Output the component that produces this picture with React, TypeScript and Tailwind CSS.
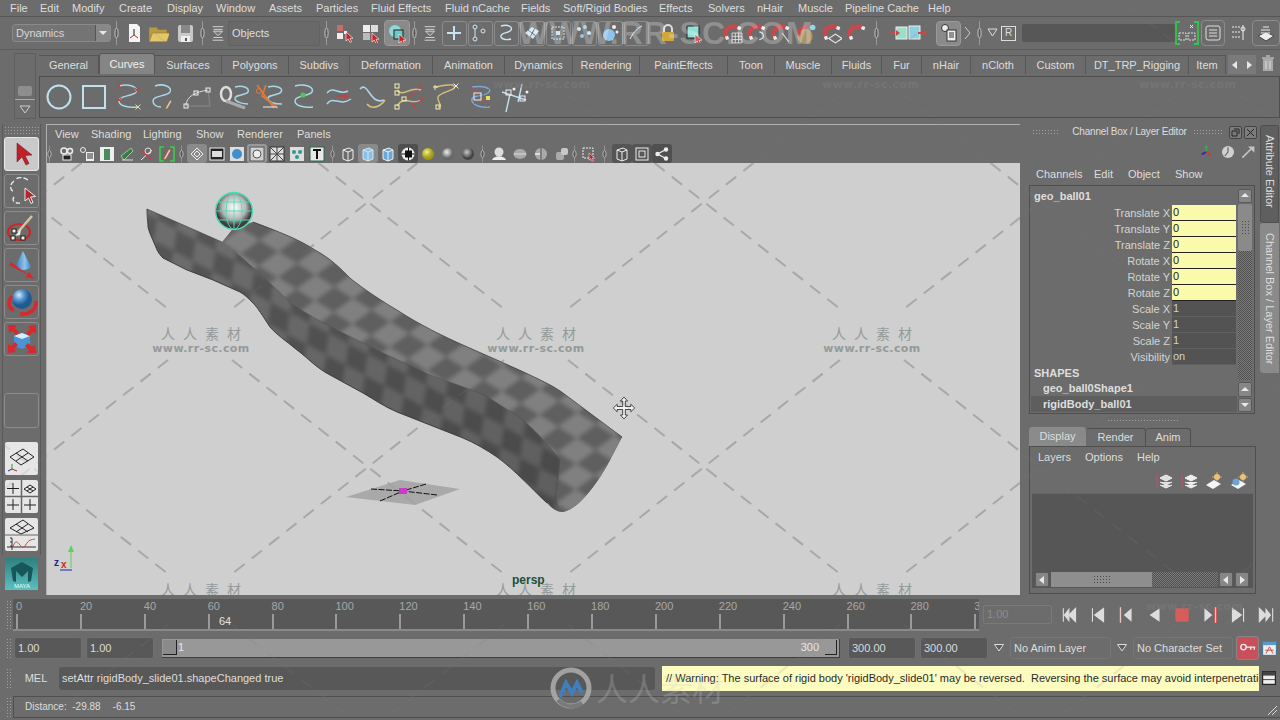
import React from 'react';

type P = { children?: React.ReactNode; s?: number; c?: string };
const V = ({ children, s = 20, c = '' }: P) => (
  <svg width={s} height={s} viewBox="0 0 20 20" fill="none" className={'shrink-0 ' + c}>{children}</svg>
);
const Cursor = ({ x = 10, y = 10, k = 1, f = '#c8242c' }: { x?: number; y?: number; k?: number; f?: string }) => (
  <path transform={`translate(${x} ${y}) scale(${k})`} d="M0 0 L0 9 L2.2 7 L4 10.5 L5.6 9.7 L4 6.4 L7 6.2 Z" fill={f} stroke="#fff" strokeWidth=".6" />
);
const Sep = () => (
  <svg width="5" height="26" viewBox="0 0 5 26" className="shrink-0 block">
    <line x1="2.5" y1="1" x2="2.5" y2="25" stroke="#9a9a9a" />
    <ellipse cx="2.5" cy="13" rx="1.6" ry="5" fill="#555" stroke="#ddd" strokeWidth=".8" />
  </svg>
);
const Filt = () => (
  <V s={18}>
    <path d="M4 3h12M5 6h10M5 15h10M4 18h12" stroke="#ddd" />
    <path d="M5 8h10l-5 5z" fill="#7a7a7a" stroke="#ddd" />
  </V>
);
const Cell = ({ children, c = 'w-[26px]' }: P) => <div className={'flex items-center justify-center shrink-0 ' + c}>{children}</div>;
const Btn = ({ children, c = 'w-[25px]' }: P) => (
  <div className={'h-[25px] flex items-center justify-center shrink-0 rounded-[3px] border border-[#8c8c8c] mx-[0.5px] ' + c}>{children}</div>
);

const Magnet = ({ extra }: { extra?: React.ReactNode }) => (
  <V s={22}>
    <path d="M5 13 C2 7 9 2 15 5" stroke="#c8484c" strokeWidth="4" />
    <path d="M15 5l3 1M5 13l1 3" stroke="#eee" strokeWidth="3" />
    {extra}
  </V>
);

const menu: [string, string][] = [
  ['File', 'w-[30px]'], ['Edit', 'w-[32px]'], ['Modify', 'w-[47px]'], ['Create', 'w-[48px]'], ['Display', 'w-[49px]'], ['Window', 'w-[53px]'],
  ['Assets', 'w-[47px]'], ['Particles', 'w-[55px]'], ['Fluid Effects', 'w-[74px]'], ['Fluid nCache', 'w-[76px]'], ['Fields', 'w-[42px]'],
  ['Soft/Rigid Bodies', 'w-[96px]'], ['Effects', 'w-[49px]'], ['Solvers', 'w-[49px]'], ['nHair', 'w-[41px]'], ['Muscle', 'w-[47px]'], ['Pipeline Cache', 'w-[83px]'], ['Help', 'w-[40px]'],
];

const tabs: [string, string, boolean?][] = [
  ['General', 'w-[60px]'], ['Curves', 'w-[56px]', true], ['Surfaces', 'w-[67px]'], ['Polygons', 'w-[67px]'], ['Subdivs', 'w-[61px]'], ['Deformation', 'w-[83px]'], ['Animation', 'w-[72px]'],
  ['Dynamics', 'w-[68px]'], ['Rendering', 'w-[67px]'], ['PaintEffects', 'w-[88px]'], ['Toon', 'w-[47px]'], ['Muscle', 'w-[57px]'], ['Fluids', 'w-[50px]'], ['Fur', 'w-[40px]'], ['nHair', 'w-[49px]'],
  ['nCloth', 'w-[55px]'], ['Custom', 'w-[60px]'], ['DT_TRP_Rigging', 'w-[103px]'], ['Item', 'w-[37px]'],
];

const curve = 'M6 4 C15 1 26 5 23 10 C19 15 6 13 6 19 C6 24 16 26 24 25';
const C = ({ children, d = curve, col = '#a9d6e8' }: { children?: React.ReactNode; d?: string; col?: string }) => (
  <svg width="30" height="30" viewBox="0 0 30 30" fill="none" className="shrink-0">
    <path d={d} stroke={col} strokeWidth="1.5" />
    {children}
  </svg>
);
const Sq = ({ x, y, c = '#f5f0b0' }: { x: number; y: number; c?: string }) => <rect x={x - 2} y={y - 2} width="4" height="4" stroke={c} fill="none" />;
const X = ({ x, y, c = '#c84040' }: { x: number; y: number; c?: string }) => <path d={`M${x - 2.5} ${y - 2.5}l5 5m0-5l-5 5`} stroke={c} />;

const shelf: React.ReactNode[] = [
  <svg width="30" height="30" viewBox="0 0 30 30" fill="none"><circle cx="15" cy="15" r="11.5" stroke="#bfe2f0" strokeWidth="2" /></svg>,
  <svg width="30" height="30" viewBox="0 0 30 30" fill="none"><rect x="4" y="4" width="22" height="22" stroke="#bfe2f0" strokeWidth="2" /></svg>,
  <C><X x={6} y={4} /><X x={24} y={8} /><X x={6} y={18} /><X x={25} y={25} c="#e8dca0" /></C>,
  <C d="M8 4 C16 1 26 5 23 10 C19 15 6 13 6 19 C6 23 10 25 14 25"><path d="M19 25l4-7 2 1-4 7-3 2z" fill="#e8c98c" stroke="#555" strokeWidth=".5" /></C>,
  <svg width="32" height="30" viewBox="0 0 32 30" fill="none"><path d="M4 24C4 14 14 10 26 8" stroke="#ddd" /><path d="M4 24L28 24M26 8L28 24" stroke="#888" /><Sq x={4} y={24} c="#eee" /><Sq x={14} y={11} c="#eee" /><Sq x={26} y={8} c="#eee" /></svg>,
  <svg width="32" height="30" viewBox="0 0 32 30" fill="none"><ellipse cx="7" cy="12" rx="5" ry="7" stroke="#ddd" strokeWidth="2.5" /><path d="M16 5C24 3 31 6 29 10C26 14 15 12 16 17C17 20 24 22 29 22" stroke="#a9d6e8" strokeWidth="1.5" /><path d="M7 19L26 26" stroke="#aaa" strokeWidth="3" /></svg>,
  <svg width="32" height="30" viewBox="0 0 32 30" fill="none"><path d="M14 5C22 3 30 6 27 10C24 14 13 12 14 17C15 21 22 22 28 22" stroke="#a9d6e8" strokeWidth="1.5" /><path d="M3 3L20 26M12 3L8 14L24 26" stroke="#e07a3a" strokeWidth="1.6" /><circle cx="5" cy="9" r="2.5" stroke="#e07a3a" /><path d="M9 25h14" stroke="#eee" /></svg>,
  <C><circle cx="14" cy="13" r="2.6" fill="#55c060" /></C>,
  <svg width="30" height="30" viewBox="0 0 30 30" fill="none"><path d="M3 11C9 3 15 14 24 9" stroke="#a9d6e8" strokeWidth="1.5" /><path d="M3 22C9 13 15 25 27 17" stroke="#a9d6e8" strokeWidth="1.5" /><path d="M12 14h10" stroke="#c84040" strokeWidth="1.4" /><path d="M20 11l5 3-5 3z" fill="#c84040" /></svg>,
  <svg width="30" height="30" viewBox="0 0 30 30" fill="none"><path d="M2 7C10 -2 12 24 26 18" stroke="#a9d6e8" strokeWidth="1.6" /><path d="M9 22C14 28 22 25 27 18" stroke="#d8c07a" strokeWidth="1.6" /></svg>,
  <svg width="32" height="30" viewBox="0 0 32 30" fill="none"><path d="M4 8C10 16 16 4 28 8" stroke="#d8c07a" strokeWidth="1.4" /><path d="M4 24C12 12 18 24 28 18" stroke="#d8c07a" strokeWidth="1.4" /><Sq x={4} y={4} /><Sq x={4} y={11} /><X x={27} y={5} /><X x={19} y={13} /><Sq x={4} y={25} /><Sq x={11} y={17} /><X x={21} y={24} /><X x={28} y={18} /></svg>,
  <svg width="30" height="30" viewBox="0 0 30 30" fill="none"><path d="M6 5C13 3 24 2 24 4C28 8 10 10 8 15C7 20 14 25 8 25" stroke="#d8c07a" strokeWidth="1.4" /><X x={26} y={4} c="#eee" /><path d="M5 3v5M3 5h5" stroke="#f5f0b0" /><Sq x={8} y={25} /></svg>,
  <svg width="34" height="30" viewBox="0 0 34 30" fill="none"><path d="M8 5C20 3 30 7 24 11C18 15 6 13 8 19C10 24 18 26 26 25" stroke="#7aa8d8" strokeWidth="1.5" /><path d="M6 3L24 25M28 4L6 26" stroke="#b85050" /><rect x="10" y="11" width="7" height="7" stroke="#eee" /><rect x="22" y="14" width="4" height="4" fill="#e8e050" /></svg>,
  <svg width="34" height="34" viewBox="0 0 34 34" fill="none"><path d="M12 14L8 32M24 4L20 22M4 12L28 20" stroke="#bfe2f0" strokeWidth="1.4" /><rect x="8" y="10" width="5" height="5" stroke="#eee" /><rect x="22" y="16" width="5" height="5" stroke="#eee" /><circle cx="16" cy="9" r="1.5" fill="#eee" /><circle cx="29" cy="12" r="1.5" fill="#eee" /></svg>,
];
const shelfW = ['w-[35px]', 'w-[35px]', 'w-[34px]', 'w-[34px]', 'w-[37px]', 'w-[37px]', 'w-[33px]', 'w-[36px]', 'w-[34px]', 'w-[34px]', 'w-[37px]', 'w-[36px]', 'w-[35px]', 'w-[34px]'];

const I16 = ({ children, c = '' }: P) => <svg width="16" height="16" viewBox="0 0 16 16" fill="none" className={'shrink-0 ' + c}>{children}</svg>;
const panel: [React.ReactNode, string?][] = [
  [<I16><circle cx="5" cy="5" r="3" stroke="#eee" strokeWidth="1.5" /><circle cx="11" cy="5" r="2.5" stroke="#eee" strokeWidth="1.5" /><rect x="4" y="9" width="8" height="5" fill="#222" stroke="#eee" /></I16>],
  [<I16><circle cx="4" cy="4" r="2.5" stroke="#eee" /><rect x="7" y="6" width="8" height="9" fill="#eee" /><path d="M8 8h6M8 10h6M8 12h6" stroke="#333" /></I16>],
  [<I16><rect x="1" y="1" width="14" height="14" fill="#eee" /><rect x="5" y="3" width="6" height="11" fill="#4a8a5a" /></I16>],
  [<I16><path d="M2 10L12 2l2 3L5 14z" stroke="#8fd08f" fill="#3c7a4a" /><path d="M3 14h11" stroke="#ddd" /></I16>],
  [<I16><path d="M2 14L13 4" stroke="#eee" /><path d="M3 4l9 9" stroke="#c84040" strokeWidth="2" /><circle cx="9" cy="5" r="3" stroke="#ddd" /></I16>],
  [<I16><path d="M5 1H1v14h4M11 1h4v14h-4" stroke="#38d048" strokeWidth="1.6" /><path d="M5 12l5-9 2 1-5 9-3 1z" fill="#e8d0b0" stroke="#c03030" strokeWidth=".6" /></I16>],
];
const panel2: [React.ReactNode, string?][] = [
  [<I16><path d="M8 2l6 6-6 6-6-6z" stroke="#eee" /><path d="M8 5l3 3-3 3-3-3z" stroke="#eee" /></I16>, 'bg-[#8a8a8a]'],
  [<I16><rect x="1" y="2" width="14" height="12" fill="#222" stroke="#eee" /><rect x="3" y="5" width="10" height="6" fill="#ddd" /></I16>],
  [<I16><rect x="1" y="1" width="14" height="14" fill="#ddd" /><circle cx="8" cy="8" r="5" fill="#3f8fcf" /></I16>],
  [<I16><rect x="1" y="1" width="14" height="14" stroke="#555" fill="#cfcfcf" /><circle cx="8" cy="8" r="4" fill="#eee" stroke="#555" /></I16>, 'bg-[#9a9a9a]'],
  [<I16><rect x="1" y="1" width="14" height="14" fill="#ddd" stroke="#333" /><path d="M1 1l14 14M15 1L1 15M8 1v14M1 8h14" stroke="#444" /></I16>],
  [<I16><rect x="1" y="1" width="14" height="14" fill="#ddd" /><circle cx="5" cy="6" r="2" fill="#2a9a8a" /><circle cx="11" cy="6" r="2" fill="#2a9a8a" /><circle cx="8" cy="11" r="2" fill="#2a9a8a" /></I16>],
  [<I16><rect x="1" y="1" width="14" height="14" fill="#e8e8e8" stroke="#2a6a4a" /><path d="M4 4h8M8 4v9" stroke="#111" strokeWidth="2" /></I16>],
];
const Cube = ({ f = 'none', st = '#eee' }: { f?: string; st?: string }) => (
  <I16><path d="M3 4l6-2 4 2v9l-5 2-5-2z" fill={f} stroke={st} /><path d="M3 4l5 2 5-2M8 6v9" stroke={st} /></I16>
);
const Ball = ({ a, b }: { a: string; b: string }) => (
  <svg width="16" height="16" viewBox="0 0 16 16" className="shrink-0"><defs><radialGradient id={a + b} cx=".4" cy=".35"><stop offset="0" stopColor={a} /><stop offset="1" stopColor={b} /></radialGradient></defs><circle cx="8" cy="8" r="6" fill={`url(#${a + b})`} /></svg>
);
const panel3: [React.ReactNode, string?][] = [
  [<Cube />],
  [<Cube f="#8cc0e8" st="#cfe6f5" />, 'bg-[#8a8a8a]'],
  [<Cube f="#6aa8d8" />],
  [<I16><circle cx="8" cy="8" r="6.5" fill="#eee" /><path d="M8 1.5v3H5v3H1.500v1H5v3h3v3h1v-3h3v-3h2.500v-1H12v-3H9v-3z" fill="#111" /></I16>, 'bg-[#4f4f4f]'],
  [<Ball a="#f5f080" b="#a09a10" />],
  [<Ball a="#f0f0f0" b="#666" />],
  [<Ball a="#c8c8c8" b="#444" />],
];
const panel4: React.ReactNode[] = [
  <I16><circle cx="8" cy="6" r="4.500" fill="#ddd" /><path d="M1 14c2-5 12-5 14 0z" fill="#eee" /></I16>,
  <I16><ellipse cx="8" cy="8" rx="6.500" ry="5" fill="#a8a8a8" /><path d="M2 8h12" stroke="#ddd" /></I16>,
  <I16><circle cx="8" cy="8" r="6" fill="#aaa" /><path d="M8 2v12" stroke="#555" /><path d="M2 8h5" stroke="#ddd" strokeWidth="2" /></I16>,
  <I16><rect x="2" y="6" width="8" height="8" rx="2" fill="#aaa" /><rect x="7" y="2" width="7" height="7" rx="2" fill="#c8c8c8" /></I16>,
];

const rows: [string, string, boolean][] = [
  ['Translate X', '0', true], ['Translate Y', '0', true], ['Translate Z', '0', true], ['Rotate X', '0', true], ['Rotate Y', '0', true], ['Rotate Z', '0', true],
  ['Scale X', '1', false], ['Scale Y', '1', false], ['Scale Z', '1', false], ['Visibility', 'on', false],
];

const dots = 'bg-[radial-gradient(#a2a2a2_0.7px,transparent_0.8px)] bg-[length:3px_3px]';
const dither = 'bg-[repeating-conic-gradient(#4e4e4e_0_25%,#7c7c7c_0_50%)] bg-[length:2px_2px]';
const Tri = ({ d }: { d: 'u' | 'd' | 'l' | 'r' }) => {
  const p = { u: 'M2 7h8L6 3z', d: 'M2 4h8L6 8z', l: 'M8 2v8L3 6z', r: 'M4 2v8l5-4z' }[d];
  return <svg width="12" height="12" viewBox="0 0 12 12"><path d={p} fill="#e8e8e8" /></svg>;
};
const SB = ({ d, c = 'w-[14px] h-[14px]' }: { d: 'u' | 'd' | 'l' | 'r'; c?: string }) => (
  <div className={'flex items-center justify-center rounded-[2px] bg-[#868686] border border-[#5a5a5a] shrink-0 ' + c}><Tri d={d} /></div>
);
const Grip = ({ c = 'h-[26px]' }: { c?: string }) => <div className={'w-[7px] shrink-0 ' + dots + ' ' + c} />;
const Field = ({ t, c = 'w-[68px]' }: { t: string; c?: string }) => (
  <div className={'h-[22px] bg-[#585858] border border-[#707070] rounded-[3px] flex items-center pl-[3px] text-[#dcdcdc] shrink-0 ' + c}>{t}</div>
);
const Down = () => (
  <svg width="12" height="10" viewBox="0 0 12 10" className="shrink-0"><path d="M1.500 1.500h9L6 8z" fill="#5c5c5c" stroke="#ddd" /></svg>
);

const play: React.ReactNode[] = [
  <path d="M3 3v12M14 3L8 9l6 6zM8 4L4 9l4 5z" fill="#ddd" stroke="#ddd" />,
  <path d="M4 3v12M14 3L6 9l8 6z" fill="#ddd" stroke="#ddd" />,
  <g><path d="M4 2v14" stroke="#d05a5a" strokeWidth="2.500" /><path d="M4 2v14" stroke="#eee" strokeWidth=".7" /><path d="M14 3L7 9l7 6z" fill="#ddd" /></g>,
  <path d="M14 3L5 9l9 6z" fill="#ddd" />,
  <rect x="3" y="3" width="12" height="12" rx="1" fill="#d85c5c" />,
  <g><path d="M14 2v14" stroke="#d05a5a" strokeWidth="2.500" /><path d="M14 2v14" stroke="#eee" strokeWidth=".7" /><path d="M4 3l7 6-7 6z" fill="#ddd" /></g>,
  <path d="M14 3v12M4 3l8 6-8 6z" fill="#ddd" stroke="#ddd" />,
  <path d="M15 3v12M3 3l6 6-6 6zM9 4l4 5-4 5z" fill="#ddd" stroke="#ddd" />,
];

const crossings: [number, number][] = [];
[-63, 202, 467, 732].forEach((y) => [32, 368, 704, 1040, 1376].forEach((x) => crossings.push([x, y])));
const Lattice = ({ col, op }: { col: string; op: number }) => (
  <>
    {crossings.map(([x, y]) => (
      <g key={x + '-' + y} stroke={col} strokeOpacity={op} strokeWidth="2" strokeDasharray="13 9">
        <path d={`M${x - 136} ${y - 107}L${x + 136} ${y + 107}`} />
        <path d={`M${x + 136} ${y - 107}L${x - 136} ${y + 107}`} />
      </g>
    ))}
  </>
);

const wmView: [string, string, boolean][] = [
  ['left-[108px] top-[161px]', 'v1', true], ['left-[443px] top-[161px]', 'v2', true], ['left-[779px] top-[161px]', 'v3', true],
  ['left-[108px] top-[417px]', 'v4', false], ['left-[443px] top-[417px]', 'v5', false], ['left-[779px] top-[417px]', 'v6', false],
];
const wmShelf: [string, string][] = [
  ['left-[493px] top-[78px]', 's1'], ['left-[822px] top-[78px]', 's2'], ['left-[1139px] top-[78px]', 's3'], ['left-[1146px] top-[600px]', 's4'],
];

const outer = 'M147 209 L222 242 L232 230 L253 222 C280 232 300 240 315 250 C330 258 340 268 350 278 C362 288 385 303 397 310 C420 325 445 337 463 345 L497 360 C510 366 520 370 530 375 C545 382 555 387 563 393 L622 437 C615 450 605 472 593 487 C585 497 575 510 562 512 C555 512 550 506 547 503 C535 492 515 470 497 457 C485 449 475 443 463 438 L430 425 L397 412 C385 407 375 400 363 393 L330 375 C315 367 308 358 297 350 C285 340 277 335 270 327 C262 315 258 308 253 303 C248 298 245 295 240 292 L213 280 L187 270 L163 258 C158 253 157 250 155 245 C152 238 149 232 148 227 Z';
const floor = 'M232 230 L253 222 C280 232 300 240 315 250 C330 258 340 268 350 278 C362 288 385 303 397 310 C420 325 445 337 463 345 L497 360 C510 366 520 370 530 375 C545 382 555 387 563 393 L622 437 C615 450 605 472 593 487 C585 497 575 510 562 512 C556 505 556 495 557 490 C558 480 559 470 560 460 C545 440 525 420 513 413 C500 405 490 398 480 393 L430 375 L383 353 L337 330 C320 322 305 312 290 303 C280 292 272 285 263 277 L240 256 L224 243 Z';

const Scene = () => (
  <svg className="absolute left-0 top-0" width="974" height="432" viewBox="47 163 974 432" fill="none">
    <defs>
      <pattern id="ck1" width="44" height="44" patternUnits="userSpaceOnUse" patternTransform="rotate(32) skewX(-22)">
        <rect width="44" height="44" fill="#808080" /><rect width="22" height="22" fill="#5f5f5f" /><rect x="22" y="22" width="22" height="22" fill="#5f5f5f" />
      </pattern>
      <pattern id="ck2" width="44" height="40" patternUnits="userSpaceOnUse" patternTransform="rotate(28) skewX(20)">
        <rect width="44" height="40" fill="#6e6e6e" /><rect width="22" height="20" fill="#565656" /><rect x="22" y="20" width="22" height="20" fill="#565656" />
      </pattern>
      <linearGradient id="wallg" x1="0" y1="0" x2=".25" y2="1">
        <stop offset="0" stopColor="#000" stopOpacity="0" /><stop offset="1" stopColor="#000" stopOpacity=".14" />
      </linearGradient>
      <clipPath id="co"><path d={outer} /></clipPath>
      <clipPath id="cf"><path d={floor} /></clipPath>
      <filter id="bl"><feGaussianBlur stdDeviation="2" /></filter>
      <radialGradient id="bg1" cx=".5" cy=".4"><stop offset="0" stopColor="#fff" /><stop offset=".65" stopColor="#b8b8b8" /><stop offset="1" stopColor="#3e3e3e" /></radialGradient>
    </defs>
    <Lattice col="#b0b0b0" op={1} />
    <g clipPath="url(#co)"><rect x="120" y="180" width="530" height="350" fill="url(#ck2)" filter="url(#bl)" /><path d={outer} fill="url(#wallg)" /></g>
    <g clipPath="url(#cf)"><rect x="120" y="180" width="530" height="350" fill="url(#ck1)" filter="url(#bl)" /></g>
    <path d="M147 209 L222 242 M253 222 C280 232 300 240 315 250 C330 258 340 268 350 278 C362 288 385 303 397 310 C420 325 445 337 463 345 L497 360 C510 366 520 370 530 375 C545 382 555 387 563 393 L622 437" stroke="#3a3a3a" strokeWidth=".6" />
    <path d="M148 227 C149 232 152 238 155 245 C157 250 158 253 163 258 L187 270 L213 280 L240 292 C245 295 248 298 253 303 C258 308 262 315 270 327 C277 335 285 340 297 350 C308 358 315 367 330 375 L363 393 C375 400 385 407 397 412 L430 425 L463 438 C475 443 485 449 497 457 C515 470 535 492 547 503" stroke="#333" strokeWidth=".9" />
    <path d="M147 209C147 218 148 224 148 227" stroke="#444" />
    <path d="M240 256 L263 277 C272 285 280 292 290 303 C305 312 320 322 337 330 L383 353 L430 375 L480 393 C490 398 500 405 513 413 C525 420 545 440 560 460 C559 470 558 480 557 490" stroke="#505050" strokeWidth=".8" strokeOpacity=".7" />
    <circle cx="234" cy="211" r="18" fill="url(#bg1)" />
    <g stroke="#4fdcb4" strokeWidth=".9">
      <circle cx="234" cy="211" r="18.500" strokeWidth="1.300" />
      <ellipse cx="234" cy="211" rx="8" ry="18.500" />
      <path d="M215.500 211h37M234 192.500v37M218 202h32M218 220h32" />
    </g>
    <path d="M346 497L400 480L460 489L415 505Z" fill="#a9a9a9" />
    <path d="M371 489L403 491M437 495L403 491M380 501L403 491M426 484L403 491" stroke="#111" strokeDasharray="6 1.500" />
    <rect x="399" y="488" width="8" height="6" fill="#c83cc8" />
    <g stroke="#333" fill="#f3f3f3" strokeWidth=".9">
      <path d="M624 397l3.500 4h-2.200v5.500h5.500v-2.200l4 3.700-4 3.700v-2.200h-5.500v5.500h2.200l-3.500 4-3.500-4h2.200v-5.500h-5.500v2.200l-4-3.700 4-3.700v2.200h5.500v-5.500h-2.200z" />
    </g>
    <path d="M71 568V548" stroke="#5ed05e" /><path d="M68 552l3-7 3 7z" fill="#5ed05e" />
    <path d="M60 570h12" stroke="#2222aa" />
    <text x="54" y="566" fontSize="10" fontWeight="700" fill="#222288" fontFamily="Liberation Sans, sans-serif">z</text>
    <text x="61" y="568" fontSize="10" fontWeight="700" fill="#c03020" fontFamily="Liberation Sans, sans-serif">x</text>
    <text x="512" y="584" fontSize="12" fontWeight="700" fill="#1a4f3c" fontFamily="Liberation Sans, sans-serif">persp</text>
  </svg>
);

const tools: React.ReactNode[] = [
  <svg width="28" height="28" viewBox="0 0 28 28"><path d="M9 3v19l5-5 4 8 3-1.500-4-8 7-.5z" fill="#c0202a" stroke="#6a1015" strokeWidth=".5" /></svg>,
  <svg width="32" height="32" viewBox="0 0 32 32" fill="none"><path d="M8 6C3 10 4 15 8 17M22 5C16 1 11 3 10 4M8 22C5 26 10 29 14 28" stroke="#eee" strokeWidth="1.300" strokeDasharray="5 2" /><path d="M19 13v13l3.500-3 2.500 5.500 2-1-2.500-5.500 5-.5z" fill="#b8242a" stroke="#eee" /></svg>,
  <svg width="32" height="32" viewBox="0 0 32 32" fill="none"><ellipse cx="13" cy="20" rx="11" ry="8" stroke="#c8282a" strokeWidth="2.200" /><path d="M26 4L12 20" stroke="#d8c0a0" strokeWidth="2.500" /><path d="M15 17l-6 7 5-1z" fill="#f3f3e0" /><rect x="6" y="17" width="4" height="4" fill="#f3f3e0" stroke="#222" /><rect x="5" y="24" width="4" height="4" fill="#f3f3e0" stroke="#222" /><rect x="15" y="24" width="4" height="4" fill="#f3f3e0" stroke="#222" /></svg>,
  <svg width="32" height="32" viewBox="0 0 32 32"><defs><linearGradient id="cone"><stop offset="0" stopColor="#2f74b4" /><stop offset=".6" stopColor="#8fc4ea" /><stop offset="1" stopColor="#3f86c4" /></linearGradient></defs><path d="M17 2L9 18c3 4 13 4 16 0z" fill="url(#cone)" /><path d="M3 16l19 10-3 2 9 2-5-7-2 2L5 13z" fill="#d8282c" /></svg>,
  <svg width="32" height="32" viewBox="0 0 32 32" fill="none"><defs><radialGradient id="sph" cx=".35" cy=".3"><stop offset="0" stopColor="#d8ecfa" /><stop offset=".5" stopColor="#5a9ad0" /><stop offset="1" stopColor="#1f5a94" /></radialGradient></defs><circle cx="16" cy="13" r="10" fill="url(#sph)" /><path d="M6 10C1 16 3 23 8 24" stroke="#d8282c" strokeWidth="3.500" /><path d="M30 15C31 23 24 29 14 28" stroke="#d8282c" strokeWidth="3.500" /></svg>,
  <svg width="32" height="32" viewBox="0 0 32 32"><path d="M16 10l8 3v10l-8 3-8-3V13z" fill="#4a94d4" /><path d="M16 10l8 3-8 3-8-3z" fill="#d8ecfa" /><path d="M2 2h9l-2 3 4 4-3 3-4-4-3 2zM30 2v9l-3-2-4 4-3-3 4-4-2-3zM2 30v-9l3 2 4-4 3 3-4 4 2 3zM30 30h-9l2-3-4-4 3-3 4 4 3-2z" fill="#d8282c" /></svg>,
];

const Views = {
  a: (
    <svg width="33" height="33" viewBox="0 0 33 33" fill="none" className="rounded-[2px] block"><rect width="33" height="33" fill="#e6e6e6" /><path d="M5 15L18 7l11 8-13 8zM11 11l12 8M23 11L11 19" stroke="#222" /><path d="M7 22v5" stroke="#2a9a3a" /><path d="M7 27l-4 2" stroke="#2222aa" /><path d="M7 27l5 2" stroke="#c02020" /></svg>
  ),
  b: (
    <svg width="33" height="33" viewBox="0 0 33 33" fill="none" className="rounded-[2px] block"><rect width="33" height="33" fill="#e6e6e6" /><path d="M16.500 0v33M0 16.500h33" stroke="#666" strokeWidth="1.500" /><path d="M8 3v11M2 8.500h12M8 19v11M2 25h12M25 19v11M19 25h12" stroke="#222" /><path d="M19 9l6-4 6 4-6 4zM22 7l6 4M28 7l-6 4" stroke="#222" /></svg>
  ),
  c: (
    <svg width="33" height="33" viewBox="0 0 33 33" fill="none" className="rounded-[2px] block"><rect width="33" height="33" fill="#e6e6e6" /><path d="M5 10L18 2l11 8-13 6zM11 6l12 8M23 6L11 14" stroke="#222" /><path d="M0 17h33" stroke="#666" /><path d="M7 20v12M2 29h29M5 20h2M5 24h2M5 28h2" stroke="#333" /><path d="M8 29c4-14 8 6 12-1s6-6 10-7" stroke="#c84848" /></svg>
  ),
};

export default function App() {
  return (
    <div className="relative w-[1280px] h-[720px] overflow-hidden bg-[#6c6c6c] text-[#dedede] text-[11px] leading-none flex flex-col font-['Liberation_Sans',sans-serif]">
      {/* Menu */}
      <div className="h-[17px] flex items-center pl-[10px] border-b border-[#565656] shrink-0">
        {menu.map(([t, w]) => <div key={t} className={'shrink-0 whitespace-nowrap ' + w}>{t}</div>)}
      </div>
      {/* Status line */}
      <div className="h-[33px] flex items-center pl-[12px] border-b border-[#5c5c5c] shrink-0">
        <div className="w-[99px] h-[18px] flex rounded-[3px] border border-[#8a8a8a] bg-[#747474] shrink-0">
          <div className="flex-1 pl-[3px] flex items-center text-[#d8d8d8]">Dynamics</div>
          <div className="w-[15px] border-l border-[#555] bg-[#888] flex items-center justify-center"><Tri d="d" /></div>
        </div>
        <div className="ml-[3px]"><Sep /></div>
        <Cell c="w-[28px] ml-[1px]"><V><path d="M5 1h8l3 3v15H5z" fill="#f4f4f4" /><path d="M10 6v6l4 3M10 12l-4 3" stroke="#c02828" /><path d="M10 12V6" stroke="#2a9a3a" /></V></Cell>
        <Cell c="w-[20px]"><V s={22}><path d="M2 5h7l1 2h8v3H6L3 18H2z" fill="#b89a44" /><path d="M5 10h16l-3 8H2z" fill="#e4c868" stroke="#8a7030" strokeWidth=".5" /></V></Cell>
        <Cell c="w-[30px] ml-[2px]"><V><rect x="3" y="2" width="15" height="17" rx="2" fill="#c8c8c8" /><rect x="6" y="2" width="9" height="8" fill="#888" /><rect x="6" y="13" width="9" height="6" fill="#eee" /><rect x="10" y="15" width="2" height="3" fill="#555" /></V></Cell>
        <Sep />
        <Cell c="w-[24px] ml-[1px]"><Filt /></Cell>
        <div className="w-[92px] h-[25px] ml-[-2px] border border-[#626262] rounded-[2px] bg-[#696969] flex items-center pl-[3px] shrink-0">Objects</div>
        <div className="ml-[4px]"><Sep /></div>
        <Cell c="w-[26px] ml-[3px]"><V><rect x="2" y="2" width="6" height="6" fill="#d06a6a" /><rect x="2" y="10" width="6" height="6" fill="#eee" /><rect x="9" y="8" width="3" height="3" fill="#eee" /><Cursor x={11} y={9} /></V></Cell>
        <Cell c="w-[26px]"><V><rect x="2" y="2" width="7" height="7" fill="#eee" /><rect x="10" y="2" width="7" height="7" fill="#ddd" /><rect x="2" y="10" width="7" height="7" fill="#bbb" /><Cursor x={11} y={10} /></V></Cell>
        <div className="w-[26px] h-[26px] bg-[#8a8a8a] rounded-[4px] border border-[#9a9a9a] flex items-center justify-center shrink-0"><V><circle cx="8" cy="8" r="6" fill="#8fd8d8" /><rect x="7" y="7" width="9" height="9" fill="#6fc8c8" stroke="#222" /><Cursor x={12} y={11} /></V></div>
        <div className="ml-[2px]"><Sep /></div>
        <Cell c="w-[23px] ml-[1px]"><Filt /></Cell>
        <div className="flex">
          <Btn><V><path d="M10 3v14M3 10h14" stroke="#c8e4f2" strokeWidth="2" /></V></Btn>
          <Btn><V><circle cx="5" cy="4" r="2" stroke="#cfe6f5" /><circle cx="13" cy="8" r="2" stroke="#cfe6f5" /><circle cx="5" cy="16" r="2" stroke="#cfe6f5" /><path d="M5 6v8" stroke="#cfe6f5" /></V></Btn>
          <Btn><V><path d="M5 3C12 1 17 4 15 7C12 11 4 9 5 14C6 17 12 17 15 16" stroke="#cfe6f5" strokeWidth="1.400" /></V></Btn>
          <Btn><V><path d="M3 10l7-6 7 4-6 8z" fill="#cfe6f5" /><path d="M6 7l8 6M13 5l-5 9" stroke="#666" /></V></Btn>
          <Btn><V><rect x="4" y="4" width="12" height="12" stroke="#cfe6f5" strokeDasharray="2 1" /><rect x="8" y="8" width="4" height="4" fill="#cfe6f5" /></V></Btn>
          <Btn><V><circle cx="5" cy="6" r="2" fill="#cfe6f5" /><circle cx="11" cy="4" r="2" fill="#9ac8de" /><circle cx="15" cy="10" r="2" fill="#cfe6f5" /><circle cx="8" cy="13" r="2" fill="#9ac8de" /></V></Btn>
          <Btn><V><circle cx="9" cy="12" r="6" fill="#8fc4ea" /><circle cx="14" cy="4" r="2" fill="#eee" /><circle cx="17" cy="9" r="1.500" fill="#eee" /></V></Btn>
          <Btn><V><path d="M4 16C8 8 12 5 16 3" stroke="#eee" /></V></Btn>
        </div>
        <Cell c="w-[25px] ml-[6px]"><V><path d="M6 9V6a4 4 0 018 0v3" stroke="#ddd" strokeWidth="2" /><rect x="4" y="9" width="12" height="9" rx="1" fill="#d0a838" /></V></Cell>
        <Cell c="w-[26px]"><V><rect x="4" y="3" width="12" height="12" fill="#8fe0d8" stroke="#222" /><Cursor x={12} y={11} /></V></Cell>
        <Cell c="w-[13px]" />
        <Cell c="w-[25px]"><Magnet extra={<path d="M10 10h9v9h-9zM13 10v9M16 10v9M10 13h9M10 16h9" stroke="#eee" strokeWidth=".7" />} /></Cell>
        <Cell c="w-[24px]"><Magnet extra={<path d="M13 9c5 1 5 6 0 7" stroke="#cfe6f5" />} /></Cell>
        <Cell c="w-[24px]"><Magnet extra={<path d="M12 10l6 8" stroke="#ddd" />} /></Cell>
        <Cell c="w-[26px]"><V s={22}><circle cx="10" cy="13" r="7" fill="#a89468" /><path d="M5 12C3 6 9 3 13 5" stroke="#c8484c" strokeWidth="3" /><circle cx="17" cy="5" r="2.500" fill="#8fd8e8" /></V></Cell>
        <Cell c="w-[25px]"><Magnet extra={<path d="M8 15l6-4 6 4-6 4z" stroke="#eee" />} /></Cell>
        <Cell c="w-[26px]"><Magnet /></Cell>
        <div className="ml-[5px]"><Sep /></div>
        <Cell c="w-[20px] ml-[10px]"><V><path d="M1 10h8" stroke="#c84848" strokeWidth="2" /><rect x="7" y="4" width="11" height="12" fill="#9ae0c8" stroke="#eee" /><path d="M7 7l4 3-4 3z" fill="#c84848" /></V></Cell>
        <Cell c="w-[20px] ml-[-1px]"><V><rect x="1" y="3" width="11" height="13" fill="#8fd0e0" stroke="#eee" /><path d="M10 10h6" stroke="#c84848" strokeWidth="2" /><path d="M15 6l4 4-4 4z" fill="#c84848" /></V></Cell>
        <div className="w-[25px] h-[25px] ml-[8px] bg-[#8a8a8a] border border-[#9a9a9a] rounded-[4px] flex items-center justify-center shrink-0"><V><circle cx="6" cy="5" r="3.500" fill="#eee" stroke="#333" /><rect x="8" y="7" width="9" height="11" fill="#eee" stroke="#333" /><path d="M10 10h5M10 12h5M10 14h5" stroke="#333" /></V></div>
        <svg width="10" height="14" viewBox="0 0 10 14" className="ml-[2px] shrink-0"><path d="M2 1l5 6-5 6" stroke="#ccc" fill="none" /></svg>
        <div className="ml-[4px]"><Sep /></div>
        <svg width="12" height="10" viewBox="0 0 12 10" className="ml-[5px] shrink-0"><path d="M1 1h9L5.500 8z" fill="none" stroke="#ddd" /></svg>
        <div className="w-[15px] h-[15px] ml-[2px] border border-[#ddd] flex items-center justify-center text-[10px] shrink-0">R</div>
        <div className="w-[153px] h-[18px] ml-[6px] bg-[#575757] rounded-[2px] shrink-0" />
        <Cell c="w-[24px]"><svg width="24" height="24" viewBox="0 0 24 24" fill="none"><path d="M5 1H1v22h4M19 1h4v22h-4" stroke="#2fc84a" strokeWidth="1.800" /><rect x="4" y="12" width="7" height="7" stroke="#ddd" strokeDasharray="2 1" /><rect x="13" y="12" width="7" height="7" stroke="#ddd" strokeDasharray="2 1" /><path d="M15 4l3 3M18 4l-3 3" stroke="#eee" /></svg></Cell>
        <div className="w-[24px] h-[26px] ml-[2px] border border-[#8c8c8c] rounded-[4px] flex items-center justify-center shrink-0"><V><rect x="3" y="3" width="14" height="14" rx="2" stroke="#ddd" /><path d="M6 7h8M6 10h8M6 13h8" stroke="#ddd" /></V></div>
        <Cell c="w-[26px] ml-[1px]"><V><path d="M3 4h8M3 9h8M3 14h8" stroke="#eee" strokeDasharray="2 1" /><path d="M14 2v15" stroke="#eee" /><circle cx="14" cy="6" r="2" stroke="#eee" /></V></Cell>
        <div className="w-[28px] h-[26px] border border-[#8c8c8c] rounded-[4px] flex items-center justify-center shrink-0"><V><path d="M2 13l8-4 8 4-8 5z" fill="#eee" stroke="#444" /><path d="M5 7h9M5 10h9M7 4h6" stroke="#eee" /></V></div>
      </div>
      {/* Shelf */}
      <div className="h-[66px] mt-[3px] flex shrink-0">
        <div className="w-[22px] ml-[14px] border border-[#5e5e5e] flex flex-col items-center justify-end shrink-0">
          <div className="w-[14px] h-[10px] bg-[#8e8e8e] rounded-[2px] mb-[3px]" />
          <div className="w-full h-px bg-[#aaa]" />
          <svg width="12" height="12" viewBox="0 0 12 12" className="my-[3px]"><path d="M1 3h10L6 10z" fill="none" stroke="#ccc" /></svg>
        </div>
        <div className="ml-[3px] flex-1 flex flex-col min-w-0">
          <div className="h-[21px] flex items-end relative shrink-0">
            {tabs.map(([t, w, on]) => (
              <div key={t} className={'shrink-0 flex items-center justify-center whitespace-nowrap border-t border-r border-[#565656] ' + w + (on ? ' h-[21px] bg-[#858585] rounded-t-[3px] border-l text-[#f0f0f0]' : ' h-[19px]')}>{t}</div>
            ))}
            <div className="flex items-center ml-[2px] h-[19px] bg-[#7a7a7a]">
              <div className="w-[14px] flex justify-center"><Tri d="l" /></div>
              <div className="w-[14px] flex justify-center"><Tri d="r" /></div>
            </div>
            <svg width="14" height="18" viewBox="0 0 14 18" className="ml-[5px] mb-px shrink-0"><path d="M2 4h10v12H2z" fill="#aaa" /><path d="M1 3h12M5 1h4M5 6v8M9 6v8" stroke="#ddd" /></svg>
          </div>
          <div className="mt-[2px] h-[42px] border border-[#4f4f4f] flex items-center pl-[1px] shrink-0">
            {shelf.map((n, i) => <Cell key={i} c={shelfW[i]}>{n}</Cell>)}
          </div>
        </div>
      </div>
      {/* Main */}
      <div className="mt-[5px] h-[471px] flex shrink-0">
        {/* tool box */}
        <div className="w-[46px] shrink-0 flex flex-col pl-[2px]">
          <div className="w-[39px] h-[431px] border-x border-[#5a5a5a] flex flex-col items-center shrink-0">
            <div className={'w-[36px] h-[10px] mt-[2px] mb-px shrink-0 ' + dots} />
            {tools.map((t, i) => (
              <div key={i} className={'w-[35px] h-[34px] mb-[3px] flex items-center justify-center rounded-[3px] border shrink-0 ' + (i === 0 ? 'bg-[#c9c9c9] border-[#e8e8e8]' : 'border-[#8c8c8c]')}>{t}</div>
            ))}
            <div className="w-[35px] h-[35px] mt-[34px] rounded-[3px] border border-[#8c8c8c] shrink-0" />
            <div className="mt-[14px] flex flex-col gap-[5px] shrink-0">{Views.a}{Views.b}{Views.c}</div>
          </div>
          <div className="w-[39px] flex justify-center mt-[3px] shrink-0">
            <div className="w-[33px] h-[32px] bg-gradient-to-b from-[#2f7f80] to-[#5cc0c0] flex items-center justify-center shrink-0">
              <svg width="30" height="30" viewBox="0 0 30 30"><path d="M15 3L26 9l-2 13-3 1V12l-6 6-6-6v11l-3-1L4 9z" fill="#17565a" /><text x="15" y="29" fontSize="6" textAnchor="middle" fill="#e8ffff" fontFamily="Liberation Sans, sans-serif">MAYA</text></svg>
            </div>
          </div>
        </div>
        {/* viewport */}
        <div className="w-[974px] flex flex-col border-t border-l border-[#b0b0b0] shrink-0">
          <div className="h-[19px] flex items-center pl-[8px] shrink-0">
            {[['View', 'w-[36px]'], ['Shading', 'w-[52px]'], ['Lighting', 'w-[53px]'], ['Show', 'w-[41px]'], ['Renderer', 'w-[60px]'], ['Panels', 'w-[50px]']].map(([t, w]) => <div key={t} className={w}>{t}</div>)}
          </div>
          <div className="h-[19px] flex items-center shrink-0">
            <div className="w-[10px] shrink-0 scale-y-[0.7] overflow-visible"><Sep /></div>
            <div className="flex">
              {panel.map(([n], i) => <Cell key={i} c="w-[20px]">{n}</Cell>)}
            </div>
            <div className="w-[8px] shrink-0 ml-[2px] scale-y-[0.7]"><Sep /></div>
            <div className="flex">
              {panel2.map(([n, b], i) => <Cell key={i} c={'w-[20px] h-[19px] rounded-[3px] ' + (b ?? '')}>{n}</Cell>)}
            </div>
            <div className="w-[8px] shrink-0 ml-[3px] scale-y-[0.7]"><Sep /></div>
            <div className="flex">
              {panel3.map(([n, b], i) => <Cell key={i} c={'w-[20px] h-[19px] rounded-[3px] ' + (b ?? '')}>{n}</Cell>)}
            </div>
            <div className="w-[8px] shrink-0 ml-[2px] scale-y-[0.7]"><Sep /></div>
            <div className="flex">
              {panel4.map((n, i) => <Cell key={i} c="w-[21px]">{n}</Cell>)}
            </div>
            <div className="w-[8px] shrink-0 scale-y-[0.7]"><Sep /></div>
            <Cell c="w-[18px]"><I16><rect x="2" y="2" width="10" height="10" stroke="#eee" strokeDasharray="2 1" /><Cursor x={8} y={7} k={.8} /></I16></Cell>
            <div className="w-[8px] shrink-0 ml-[4px] scale-y-[0.7]"><Sep /></div>
            <Cell c="w-[20px] h-[19px] ml-[2px] rounded-[3px] bg-[#555]"><Cube /></Cell>
            <Cell c="w-[20px] h-[19px] rounded-[3px] bg-[#555]"><I16><rect x="2" y="2" width="12" height="12" stroke="#eee" /><rect x="5" y="5" width="6" height="6" stroke="#eee" /></I16></Cell>
            <Cell c="w-[20px] h-[19px] rounded-[3px] bg-[#4f4f4f]"><I16><circle cx="3.500" cy="8" r="2.200" fill="#eee" /><circle cx="12" cy="3.500" r="2.200" fill="#eee" /><circle cx="12" cy="12.500" r="2.200" fill="#eee" /><path d="M12 3.500L3.500 8 12 12.500" stroke="#eee" strokeWidth="1.300" /></I16></Cell>
          </div>
          <div className="relative flex-1 bg-[#cfcfcf] overflow-hidden">
            <Scene />
            {wmView.map(([pos, k, www]) => (
              <div key={k} className={'absolute pointer-events-none flex flex-col items-center w-[92px] text-[#949a9a] ' + pos}>
                <div className="text-[14px] leading-[18px] tracking-[8px] pl-[8px] whitespace-nowrap font-['Noto_Sans_CJK_SC',sans-serif]">人人素材</div>
                {www && <div className="text-[11px] leading-[14px] tracking-[0.4px] font-bold whitespace-nowrap font-['DejaVu_Sans',sans-serif]">www.rr-sc.com</div>}
              </div>
            ))}
          </div>
        </div>
        {/* channel box */}
        <div className="w-[228px] ml-[9px] flex flex-col shrink-0">
          <div className="h-[16px] flex items-center shrink-0">
            <div className={'w-[26px] h-[6px] ml-[3px] shrink-0 ' + dots} />
            <div className="w-[115px] text-center ml-[14px] text-[10px] tracking-[-0.2px] whitespace-nowrap shrink-0">Channel Box / Layer Editor</div>
            <div className={'w-[30px] h-[6px] ml-[6px] shrink-0 ' + dots} />
            <div className="w-[13px] h-[13px] ml-[6px] border border-[#444] bg-[#7c7c7c] rounded-[2px] flex items-center justify-center shrink-0"><svg width="9" height="9" viewBox="0 0 9 9" fill="none"><path d="M3 1h5v5M1 3h5v5H1z" stroke="#222" /></svg></div>
            <div className="w-[13px] h-[13px] ml-[2px] border border-[#444] bg-[#7c7c7c] rounded-[2px] flex items-center justify-center shrink-0"><svg width="9" height="9" viewBox="0 0 9 9" fill="none"><path d="M1 1l7 7M8 1L1 8" stroke="#222" /></svg></div>
          </div>
          <div className="h-[24px] flex items-center justify-end pr-[1px] gap-[4px] shrink-0">
            <V s={16}><path d="M8 2v8" stroke="#2fae4a" strokeWidth="2" /><path d="M5 5l3-4 3 4z" fill="#2fae4a" /><path d="M8 10l-6 3" stroke="#2030b0" strokeWidth="2.200" /><path d="M8 10l6 4" stroke="#c83a3a" strokeWidth="2.200" /></V>
            <V s={16}><circle cx="10" cy="10" r="7.500" fill="#d0d0d0" /><path d="M10 4v6l-4 5" stroke="#666" strokeWidth="1.500" /></V>
            <V s={16}><path d="M3 17L16 4" stroke="#c4c4c4" strokeWidth="2" /><path d="M10 3h8v8z" fill="#c4c4c4" /></V>
          </div>
          <div className="h-[20px] flex items-center shrink-0 pl-[7px]">
            <div className="w-[58px]">Channels</div><div className="w-[34px]">Edit</div><div className="w-[47px]">Object</div><div>Show</div>
          </div>
          <div className="h-[229px] w-[226px] mt-px border border-[#4f4f4f] flex p-[1px] shrink-0">
            <div className="w-[206px] flex flex-col">
              <div className="h-[18px] pl-[3px] flex items-center font-bold shrink-0">geo_ball01</div>
              {rows.map(([l, v, y]) => (
                <div key={l} className="h-[16px] flex shrink-0">
                  <div className="w-[141px] text-right pr-[2px] leading-[16px] text-[#d4d4d4]">{l}</div>
                  <div className={'w-[64px] pl-[1px] leading-[15px] border-b ' + (y ? 'bg-[#fafaaa] text-[#222] border-[#222]' : 'bg-[#535353] text-[#d0d0d0] border-[#5f5f5f]')}>{v}</div>
                </div>
              ))}
              <div className="h-[16px] pl-[3px] flex items-center font-bold shrink-0">SHAPES</div>
              <div className="h-[15px] pl-[12px] flex items-center font-bold shrink-0">geo_ball0Shape1</div>
              <div className="h-[16px] pl-[12px] flex items-center font-bold bg-[#5e5e5e] shrink-0">rigidBody_ball01</div>
            </div>
            <div className="w-[14px] ml-[1px] flex flex-col shrink-0 pt-[2px]">
              <SB d="u" />
              <div className="h-[47px] bg-[#8a8a8a] rounded-[2px] mt-[1px] flex items-center justify-center shrink-0"><div className="w-[9px] h-[15px] bg-[radial-gradient(#4a4a4a_0.7px,transparent_0.8px)] bg-[length:3px_3px]" /></div>
              <div className={'flex-1 ' + dither} />
              <SB d="u" c="w-[14px] h-[15px] mt-[2px]" />
              <SB d="d" c="w-[14px] h-[14px] mt-[1px]" />
            </div>
          </div>
          <div className="h-[13px] flex items-center justify-center shrink-0"><div className={'w-[72px] h-[4px] ' + dots} /></div>
          <div className="h-[19px] flex items-end shrink-0">
            <div className="w-[57px] h-[19px] bg-[#8a8a8a] rounded-t-[3px] flex items-center justify-center">Display</div>
            <div className="w-[60px] h-[18px] border-t border-r border-[#4f4f4f] rounded-t-[3px] flex items-center justify-center">Render</div>
            <div className="w-[45px] h-[18px] border-t border-r border-[#4f4f4f] rounded-t-[3px] flex items-center justify-center">Anim</div>
          </div>
          <div className="h-[148px] w-[227px] border border-[#4f4f4f] flex flex-col shrink-0">
            <div className="h-[21px] flex items-center pl-[8px] shrink-0"><div className="w-[47px]">Layers</div><div className="w-[52px]">Options</div><div>Help</div></div>
            <div className="h-[25px] flex items-center justify-end gap-[5px] pr-[6px] shrink-0">
              <V><path d="M3 3v14" stroke="#c85060" /><path d="M6 7l6-3 6 3-6 3zM6 11l6 3 6-3M6 14l6 3 6-3" stroke="#eee" fill="#ddd" /></V>
              <V><path d="M3 3v14" stroke="#c85060" /><path d="M6 7l6-3 6 3-6 3zM6 11l6 3 6-3M6 14l6 3 6-3" stroke="#eee" fill="#eee" /></V>
              <V><path d="M2 14l8-5 7 4-8 5z" fill="#f5f5f5" /><circle cx="13" cy="6" r="3" fill="#f0c070" /><path d="M13 1v10M8 6h10" stroke="#f0c070" strokeWidth=".7" /></V>
              <V><path d="M2 14l8-5 7 4-8 5z" fill="#f5f5f5" /><circle cx="7" cy="11" r="3.500" fill="#6fa4d8" /><circle cx="14" cy="6" r="3" fill="#f0c070" /><path d="M14 1v10M9 6h10" stroke="#f0c070" strokeWidth=".7" /></V>
            </div>
            <div className="mx-[2px] h-[78px] bg-[#565656] border-t border-[#666] shrink-0" />
            <div className="mx-[2px] h-[17px] bg-[#565656] flex items-center pl-[3px] shrink-0">
              <SB d="l" c="w-[14px] h-[15px]" />
              <div className="w-[101px] h-[15px] bg-[#8e8e8e] ml-[2px] flex items-center justify-center"><div className="w-[18px] h-[9px] bg-[radial-gradient(#4a4a4a_0.7px,transparent_0.8px)] bg-[length:3px_3px]" /></div>
              <div className={'w-[66px] h-[15px] ' + dither} />
              <SB d="l" c="w-[14px] h-[15px] ml-px" />
              <SB d="r" c="w-[14px] h-[15px] ml-[2px]" />
            </div>
          </div>
        </div>
        {/* side tabs */}
        <div className="ml-[3px] w-[19px] flex flex-col shrink-0 mt-px">
          <div className="h-[98px] bg-[#5f5f5f] border border-[#4f4f4f] rounded-l-[3px] flex items-center justify-start pt-[9px] [writing-mode:vertical-rl] text-[11px] shrink-0 whitespace-nowrap">Attribute Editor</div>
          <div className="h-[150px] bg-[#8a8a8a] rounded-l-[3px] flex items-center justify-start pt-[10px] [writing-mode:vertical-rl] text-[11px] shrink-0 whitespace-nowrap">Channel Box / Layer Editor</div>
        </div>
      </div>
      {/* Time slider */}
      <div className="h-[33px] mt-[3px] flex items-center shrink-0">
        <Grip c="h-[30px] ml-[6px]" />
        <div className="w-[966px] h-[32px] bg-[#585858] relative overflow-hidden flex pl-[3px] border-b-2 border-[#8a8a8a] shrink-0">
          {Array.from({ length: 16 }, (_, i) => (
            <div key={i} className="w-[63.900px] shrink-0 flex flex-col text-[#a8a8a8]">
              <div className="h-[15px] flex items-center pt-[1px]">{i * 20}</div>
              <div className="w-[2px] h-[15px] bg-[#9a9a9a]" />
            </div>
          ))}
          <div className="absolute left-[206px] top-[17px] text-[#e4e4e4]">64</div>
        </div>
        <div className="w-[69px] h-[19px] ml-[4px] border border-[#7a7a7a] rounded-[2px] flex items-center pl-[3px] text-[#8e8e8e] shrink-0">1.00</div>
        <div className="flex ml-[4px]">
          {play.map((p, i) => <Cell key={i} c="w-[28px]"><svg width="20" height="20" viewBox="0 0 18 18" fill="none">{p}</svg></Cell>)}
        </div>
      </div>
      {/* Range */}
      <div className="h-[26px] mt-[4px] flex items-center shrink-0">
        <Grip c="h-[20px] ml-[6px]" />
        <Field t="1.00" c="w-[68px] ml-px" />
        <Field t="1.00" c="w-[68px] ml-[4px]" />
        <div className="w-[678px] h-[19px] ml-[8px] bg-[#989898] border-b border-[#3f3f3f] border-r flex items-center justify-between shrink-0">
          <div className="flex items-center gap-[1px] pl-[1px]"><div className="w-[14px] h-[15px] bg-[#8a8a8a] border-r border-b border-[#222]" /><span className="text-[#e8e8e8]">1</span></div>
          <div className="flex items-center gap-[6px] pr-[2px]"><span className="text-[#e8e8e8]">300</span><div className="w-[12px] h-[15px] border-r border-b border-[#222]" /></div>
        </div>
        <Field t="300.00" c="w-[68px] ml-[8px]" />
        <Field t="300.00" c="w-[68px] ml-[4px]" />
        <div className="w-[22px] flex justify-center shrink-0"><Down /></div>
        <div className="w-[101px] h-[22px] border border-[#767676] rounded-[3px] flex items-center pl-[3px] shrink-0">No Anim Layer</div>
        <div className="w-[22px] flex justify-center shrink-0"><Down /></div>
        <div className="w-[100px] h-[22px] border border-[#767676] rounded-[3px] flex items-center pl-[3px] shrink-0">No Character Set</div>
        <div className="w-[23px] h-[24px] ml-[3px] bg-[#c8505a] border border-[#888] rounded-[3px] flex items-center justify-center shrink-0"><V s={18}><circle cx="5" cy="9" r="3" stroke="#eee" strokeWidth="1.500" /><path d="M8 9h10M13 9v3M17 9v3" stroke="#eee" strokeWidth="1.500" /></V></div>
        <div className="w-[17px] ml-[2px] flex justify-center shrink-0"><V s={17}><rect x="2" y="2" width="16" height="16" fill="#eee" stroke="#2a6a9a" /><rect x="2" y="2" width="16" height="4" fill="#5a9ac8" /><path d="M6 16l4-8 4 8M5 12h10" stroke="#c84040" /></V></div>
      </div>
      {/* Command line */}
      <div className="h-[26px] mt-[4px] flex items-center shrink-0">
        <Grip c="h-[20px] ml-[6px]" />
        <div className="w-[46px] text-center shrink-0">MEL</div>
        <div className="w-[596px] h-[23px] bg-[#585858] rounded-[3px] flex items-center pl-[3px] shrink-0">setAttr rigidBody_slide01.shapeChanged true</div>
        <div className="w-[597px] h-[25px] ml-[7px] bg-[#fcfcc0] text-[#2a2a2a] flex items-center pl-[4px] whitespace-nowrap overflow-hidden shrink-0">// Warning: The surface of rigid body 'rigidBody_slide01' may be reversed.&nbsp; Reversing the surface may avoid interpenetration</div>
        <div className="w-[17px] ml-[1px] flex justify-center shrink-0"><V s={16}><rect x="2" y="2" width="16" height="16" fill="#eee" stroke="#222" strokeWidth="1.500" /><rect x="2" y="2" width="16" height="5" fill="#444" /><path d="M2 12h16" stroke="#222" /></V></div>
      </div>
      {/* Help line */}
      <div className="h-[22px] mt-[5px] flex items-center shrink-0">
        <Grip c="h-[20px] ml-[6px]" />
        <div className="w-[1267px] h-[22px] border-t border-b border-l border-[#4f4f4f] flex items-center pl-[11px] text-[10px] gap-[12px] text-[#dcdcdc] shrink-0">
          <span>Distance:&nbsp; -29.88</span><span>-6.15</span>
        </div>
      </div>
      {/* Watermark overlay */}
      <svg className="absolute left-0 top-0 pointer-events-none" width="1280" height="720" viewBox="0 0 1280 720" fill="none">
        <Lattice col="#808080" op={0.15} />
        <path d="M1268 715l9-9M1272 715l5-5" stroke="#ddd" />
        <g>
          <circle cx="571" cy="688" r="18" stroke="#b4b4b4" strokeOpacity=".8" strokeWidth="5" />
          <path d="M558 700a18 18 0 0 0 24 3" stroke="#666" strokeWidth="4" strokeOpacity=".7" />
          <path d="M560 697l6-14 6 10 5-10 5 10" stroke="#3f7fc0" strokeWidth="4" />
        </g>
      </svg>
      {wmShelf.map(([pos, k]) => (
        <div key={k} className={"absolute pointer-events-none w-[92px] text-center text-[11px] leading-[13px] tracking-[0.4px] font-bold whitespace-nowrap text-[#808080]/45 font-['DejaVu_Sans',sans-serif] " + pos}>www.rr-sc.com</div>
      ))}
      <div className="absolute left-[518px] top-[18px] pointer-events-none text-[32px] leading-[30px] text-white/25 font-bold whitespace-nowrap tracking-[1px] font-['Liberation_Sans',sans-serif]">WWW.RR-SC.COM</div>
      <div className="absolute left-[596px] top-[669px] pointer-events-none text-[32px] leading-[36px] text-[#c8c8c8]/25 whitespace-nowrap font-['Noto_Sans_CJK_SC',sans-serif]">人人素材</div>
    </div>
  );
}
